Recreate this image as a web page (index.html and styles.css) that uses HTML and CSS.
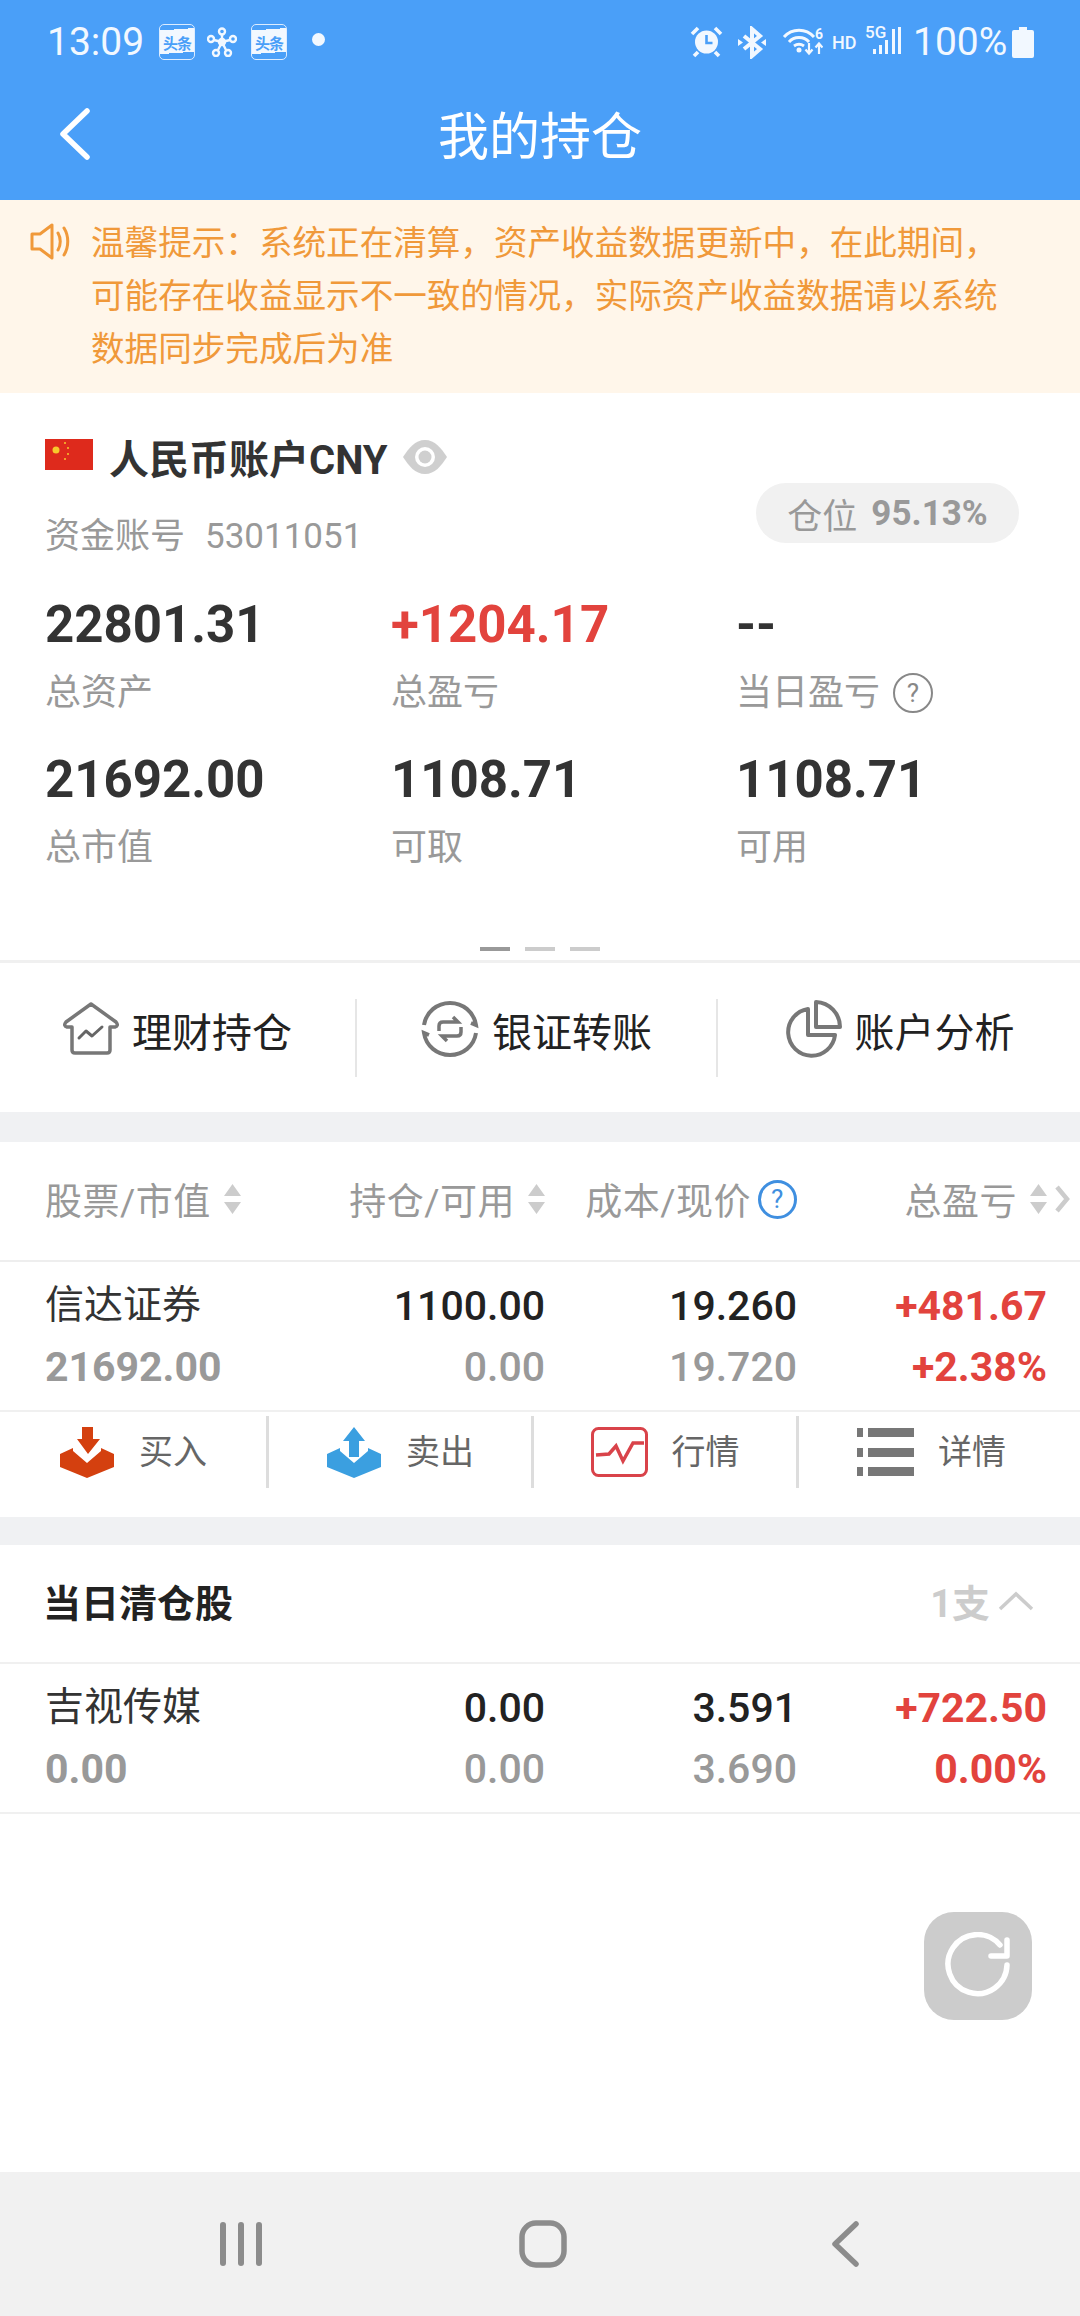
FILE: index.html
```html
<!DOCTYPE html>
<html>
<head>
    <meta charset="UTF-8">
    <title>我的持仓</title>
    <link rel="stylesheet" href="styles.css">
</head>
<body>
<div class="page">
    <div class="status-bar">
        <div class="status-left">
            <span class="clock">13:09</span>
            <span class="app-badge">头条</span>
            <svg width="30" height="30" viewBox="0 0 30 30" fill="none" stroke="#f2f8ff" stroke-width="2.400"><path d="M15 15V7M15 15 7 13M15 15l8-2M15 15l-4 8M15 15l4 8"/><circle cx="15" cy="15" r="3" fill="#f2f8ff"/><circle cx="15" cy="4.500" r="3"/><circle cx="4" cy="12" r="3"/><circle cx="26" cy="12" r="3"/><circle cx="9" cy="26" r="3"/><circle cx="21" cy="26" r="3"/></svg>
            <span class="app-badge">头条</span>
            <span class="status-dot"></span>
        </div>
        <div class="status-right">
            <svg class="ic-alarm" width="33" height="32" viewBox="0 0 33 32"><circle cx="16.500" cy="16" r="11.500" fill="#f2f8ff"/><path d="M16.500 9v8h6" fill="none" stroke="#4a9ff8" stroke-width="2.600"/><path d="M2 8l6-6M31 8l-6-6M8 26l-4 4M25 26l4 4" stroke="#f2f8ff" stroke-width="3.600"/></svg>
            <svg class="ic-bt" width="28" height="33" viewBox="0 0 28 33" fill="none" stroke="#f2f8ff" stroke-width="4"><path d="M6 10l16 13-8 7V3l8 7L6 23"/><path d="M0 13l5 3.500L0 20zM28 13l-5 3.500 5 3.500z" fill="#f2f8ff" stroke="none"/></svg>
            <svg class="ic-wifi" width="41" height="36" viewBox="0 -2 41 36" fill="none" stroke="#f2f8ff" stroke-width="3"><path d="M2 11C10 2 24 2 32 11M7 16c5-6 15-6 20 0M12 20c3-2 7-2 10 0"/><circle cx="17" cy="24" r="2.500" fill="#f2f8ff" stroke="none"/><path d="M27 17v10M23.500 23.500l3.500 4 3.500-4M37 28V18M33.500 21.500l3.500-4 3.500 4" stroke-width="2.200"/><text x="33" y="13" class="sig-six">6</text></svg>
            <span class="hd">HD</span>
            <svg class="ic-signal" width="36" height="42" viewBox="0 0 36 42"><text x="0" y="17" class="sig-text">5G</text><path d="M8 28h3v5H8zM14 24h3v9h-3zM20 19h3v14h-3zM27 8h3v25h-3zM33 6h3v27h-3z" fill="#f2f8ff"/></svg>
            <span class="battery-text">100%</span>
            <svg width="22" height="31" viewBox="0 0 22 31"><path d="M7 0h8v3h5q2 0 2 2v24q0 2-2 2H2q-2 0-2-2V5q0-2 2-2h5z" fill="#f2f8ff"/></svg>
        </div>
    </div>
    <div class="title-bar">
        <svg class="back-icon" width="34" height="52" viewBox="0 0 34 52" fill="none" stroke="#fff" stroke-width="5.500" stroke-linecap="round" stroke-linejoin="round"><path d="M29 3 5 26l24 23"/></svg>
        <h1>我的持仓</h1>
    </div>

    <div class="notice">
        <svg class="notice-icon" width="42" height="37" viewBox="0 0 42 37" fill="none" stroke="#f0993a" stroke-width="3" stroke-linejoin="round" stroke-linecap="round"><path d="M2 11h8L22 2v33L10 26H2z"/><path d="M28 10c3 5 3 12 0 17M34 5c5 8 5 19 0 27"/></svg>
        <p>温馨提示：系统正在清算，资产收益数据更新中，在此期间，<br>可能存在收益显示不一致的情况，实际资产收益数据请以系统<br>数据同步完成后为准</p>
    </div>

    <div class="account">
        <div class="account-head">
            <div>
                <div class="account-title">
                    <svg class="flag" width="48" height="31" viewBox="0 0 48 31"><rect width="48" height="31" fill="#de2a1c"/><circle cx="11" cy="11" r="3.500" fill="#f7c92c"/><circle cx="20" cy="4" r="1" fill="#f7c92c"/><circle cx="23" cy="9" r="1" fill="#f7c92c"/><circle cx="23" cy="15" r="1" fill="#f7c92c"/><circle cx="20" cy="20" r="1" fill="#f7c92c"/></svg>
                    <span>人民币账户CNY</span>
                    <svg width="46" height="34" viewBox="0 0 46 34"><path d="M23 0C13 0 7 8 1 17c6 9 12 17 22 17s16-8 22-17C39 8 33 0 23 0z" fill="#cfcfcf"/><circle cx="23" cy="17" r="10" fill="#fff"/><circle cx="23" cy="17" r="6.500" fill="#cfcfcf"/></svg>
                </div>
                <div class="account-no"><span>资金账号</span><span>53011051</span></div>
            </div>
            <div class="position-pill">仓位<b>95.13%</b></div>
        </div>
        <div class="stats">
            <div class="stat"><div class="stat-value">22801.31</div><div class="stat-label">总资产</div></div>
            <div class="stat"><div class="stat-value red">+1204.17</div><div class="stat-label">总盈亏</div></div>
            <div class="stat"><div class="stat-value">--</div><div class="stat-label">当日盈亏<span class="help-grey">?</span></div></div>
            <div class="stat"><div class="stat-value">21692.00</div><div class="stat-label">总市值</div></div>
            <div class="stat"><div class="stat-value">1108.71</div><div class="stat-label">可取</div></div>
            <div class="stat"><div class="stat-value">1108.71</div><div class="stat-label">可用</div></div>
        </div>
        <div class="pager"><span class="on"></span><span></span><span></span></div>
    </div>

    <div class="actions">
        <div class="action">
            <svg width="56" height="53" viewBox="0 0 56 53" fill="none" stroke="#777" stroke-width="3.500" stroke-linejoin="round" stroke-linecap="round"><path d="M28 2 3 20q-3 4 1 5h5v23q0 3 3 3h32q3 0 3-3V25h5q4-1 1-5z"/><path d="M16 36l7-7 6 5 10-9" stroke="#666" stroke-width="3"/></svg>
            <span>理财持仓</span>
        </div>
        <div class="action">
            <svg width="58" height="58" viewBox="0 0 58 58" fill="none" stroke="#777" stroke-width="4"><path d="M3 25C5 12 16 3 29 3s24 9 26 22l-5-2M55 33C53 46 42 55 29 55S5 46 3 33l5 2"/><path d="M18 31v-5q0-4 4-4h15l-5-5M40 27v5q0 4-4 4H21l5 5" stroke-width="3.500"/></svg>
            <span>银证转账</span>
        </div>
        <div class="action">
            <svg width="58" height="58" viewBox="0 0 58 58" fill="none" stroke="#777" stroke-width="4" stroke-linejoin="round"><path d="M24 9A23.500 23.500 0 1 0 51 35H24z"/><path d="M32 2a25 25 0 0 1 24 25H32z"/></svg>
            <span>账户分析</span>
        </div>
    </div>
    <div class="band"></div>

    <div class="table-head">
        <div class="th th-first">股票/市值<svg class="sort" width="17" height="30" viewBox="0 0 17 30"><path d="M8.500 0 17 12H0zM0 18h17L8.500 30z"/></svg></div>
        <div class="th">持仓/可用<svg class="sort" width="17" height="30" viewBox="0 0 17 30"><path d="M8.500 0 17 12H0zM0 18h17L8.500 30z"/></svg></div>
        <div class="th">成本/现价<span class="help-blue">?</span></div>
        <div class="th">总盈亏<svg class="sort" width="17" height="30" viewBox="0 0 17 30"><path d="M8.500 0 17 12H0zM0 18h17L8.500 30z"/></svg><svg class="more" width="16" height="30" viewBox="0 0 16 30" fill="none" stroke="#ccc" stroke-width="4.500"><path d="M3 3l10 12L3 27"/></svg></div>
    </div>

    <div class="row">
        <div class="name">信达证券</div><div class="num">1100.00</div><div class="num">19.260</div><div class="num red bold">+481.67</div>
        <div class="num-left grey bold">21692.00</div><div class="num grey">0.00</div><div class="num grey">19.720</div><div class="num red bold">+2.38%</div>
    </div>
    <div class="trade">
        <div class="trade-item">
            <svg width="56" height="51" viewBox="0 0 56 51" fill="#d4400f"><path d="M1 27l13-6v3l14 12 14-12v-3l13 6v13L28 51 1 40z"/><path d="M23 0h11v12h7L29 27 18 12h5z"/></svg>
            <span>买入</span>
        </div>
        <div class="trade-item">
            <svg width="56" height="51" viewBox="0 0 56 51" fill="#3b9fe0"><path d="M1 27l13-6v3l14 12 14-12v-3l13 6v13L28 51 1 40z"/><path d="M28 0l11 14h-6v16H23V14h-6z"/></svg>
            <span>卖出</span>
        </div>
        <div class="trade-item">
            <svg width="57" height="50" viewBox="0 0 57 50" fill="none" stroke="#d9434a"><rect x="1.500" y="1.500" width="54" height="47" rx="6" stroke-width="3"/><path d="M5 28l13-1 7-8 7 15 10-18h11" stroke-width="3.500"/></svg>
            <span>行情</span>
        </div>
        <div class="trade-item">
            <svg width="57" height="48" viewBox="0 0 57 48" fill="#777"><path d="M0 0h6v9H0zM11 0h46v9H11zM0 20h6v9H0zM11 20h46v9H11zM0 39h6v9H0zM11 39h46v9H11z"/></svg>
            <span>详情</span>
        </div>
    </div>
    <div class="band band-low"></div>

    <div class="cleared-head">
        <span class="cleared-title">当日清仓股</span>
        <span class="cleared-count">1支<svg width="36" height="20" viewBox="0 0 36 20" fill="none" stroke="#ccc" stroke-width="3.500"><path d="M2 18 18 3l16 15"/></svg></span>
    </div>
    <div class="row">
        <div class="name">吉视传媒</div><div class="num">0.00</div><div class="num">3.591</div><div class="num red bold">+722.50</div>
        <div class="num-left grey bold">0.00</div><div class="num grey">0.00</div><div class="num grey">3.690</div><div class="num red bold">0.00%</div>
    </div>

    <div class="spacer"></div>
    <div class="nav-bar">
        <svg width="42" height="46" viewBox="0 0 42 46" fill="#8c8c8c"><rect y="1" width="6" height="44" rx="3"/><rect x="18" y="1" width="6" height="44" rx="3"/><rect x="36" y="1" width="6" height="44" rx="3"/></svg>
        <svg class="nav-home" width="48" height="48" viewBox="0 0 48 48" fill="none" stroke="#8c8c8c" stroke-width="5.500"><rect x="3" y="3" width="42" height="42" rx="14"/></svg>
        <svg width="28" height="46" viewBox="0 0 28 46" fill="none" stroke="#8c8c8c" stroke-width="5.500" stroke-linecap="round" stroke-linejoin="round"><path d="M24 3 3 23l21 20"/></svg>
    </div>

    <div class="refresh">
        <svg width="68" height="68" viewBox="0 0 68 68" fill="none" stroke="#fff" stroke-width="5.500" stroke-linecap="round" stroke-linejoin="round"><path d="M63 33a29.500 29.500 0 1 1-7-20"/><path d="M63 8v16H47"/></svg>
    </div>
</div>
</body>
</html>
```

FILE: styles.css
```css
/* page frame */
* {
    box-sizing: border-box;
}

body {
    margin: 0;
    background-color: #fff;
    font-family: Roboto, "Noto Sans CJK SC", sans-serif;
    color: #333;
}

.page {
    position: relative;
    display: flex;
    flex-direction: column;
    width: 1080px;
    height: 2316px;
    overflow: hidden;
}

.red {
    color: #e2433d;
}

.grey {
    color: #999;
}

.bold {
    font-weight: 700;
}

/* status bar */
.status-bar {
    display: flex;
    justify-content: space-between;
    align-items: center;
    height: 84px;
    padding: 0 46px 0 47px;
    background-color: #4a9ff8;
    color: #f2f8ff;
}

.status-left,
.status-right {
    display: flex;
    align-items: center;
}

.clock {
    width: 112px;
    font-size: 39px;
}

.app-badge {
    display: flex;
    align-items: center;
    justify-content: center;
    width: 36px;
    height: 36px;
    margin-right: 12px;
    border: 1.500px solid #dcecff;
    border-radius: 5px;
    background: linear-gradient(176deg, transparent 15%, #f2f8ff 15%, #f2f8ff 80%, transparent 80%);
    color: #4a9ff8;
    font-size: 15px;
    font-weight: 700;
    letter-spacing: -1px;
    white-space: nowrap;
}

.status-left svg {
    margin-right: 14px;
}

.status-dot {
    width: 13px;
    height: 13px;
    margin: 0 0 6px 13px;
    border-radius: 50%;
    background-color: #f2f8ff;
}

.ic-alarm {
    margin-right: 15px;
}

.ic-bt {
    margin-right: 16px;
}

.ic-wifi {
    margin-right: 9px;
}

.hd {
    width: 33px;
    font-size: 18px;
    font-weight: 500;
}

.sig-text {
    fill: #f2f8ff;
    font-size: 17px;
    font-weight: 500;
}

.sig-six {
    fill: #f2f8ff;
    stroke: none;
    font-size: 14px;
    font-weight: 700;
}

.battery-text {
    width: 99px;
    margin-left: 12px;
    font-size: 39px;
    white-space: nowrap;
}

/* title bar */
.title-bar {
    position: relative;
    display: flex;
    align-items: center;
    justify-content: center;
    height: 116px;
    background-color: #4a9ff8;
}

.title-bar h1 {
    margin: 0 0 8px;
    color: #fff;
    font-size: 51px;
    font-weight: 400;
    line-height: 100px;
}

.back-icon {
    position: absolute;
    left: 58px;
    top: 24px;
}

/* notice */
.notice {
    display: flex;
    height: 193px;
    padding: 23px 0 0 30px;
    background-color: #fff6ea;
}

.notice-icon {
    flex: none;
    margin-right: 19px;
}

.notice p {
    margin: -6px 0 0;
    color: #f0993a;
    font-size: 33.600px;
    line-height: 53px;
    white-space: nowrap;
}

/* account card */
.account {
    height: 567px;
}

.account-head {
    display: flex;
    justify-content: space-between;
    height: 168px;
    padding: 40px 61px 0 45px;
}

.account-title {
    display: flex;
    align-items: center;
    height: 48px;
    font-size: 40px;
    font-weight: 700;
}

.account-title span {
    margin: 0 14px 0 16px;
    white-space: nowrap;
}

.flag {
    margin-bottom: 6px;
}

.account-no {
    display: flex;
    gap: 20px;
    margin-top: 32px;
    color: #999;
    font-size: 35px;
    line-height: 48px;
}

.position-pill {
    display: flex;
    align-items: center;
    justify-content: center;
    gap: 14px;
    width: 263px;
    height: 60px;
    margin-top: 50px;
    border-radius: 30px;
    background-color: #f1f1f1;
    color: #999;
    font-size: 35px;
}

.stats {
    display: grid;
    grid-template-columns: 346px 345px 300px;
    row-gap: 32px;
    margin-top: 34px;
    padding-left: 45px;
}

.stat-value {
    height: 60px;
    font-size: 51px;
    font-weight: 700;
    line-height: 60px;
}

.stat-label {
    display: flex;
    align-items: center;
    height: 50px;
    margin-top: 13px;
    color: #999;
    font-size: 36px;
    line-height: 50px;
}

.help-grey {
    display: flex;
    align-items: center;
    justify-content: center;
    width: 40px;
    height: 40px;
    margin-left: 13px;
    border: 2px solid #888;
    border-radius: 50%;
    color: #888;
    font-size: 26px;
}

.pager {
    display: flex;
    justify-content: center;
    gap: 15px;
    margin-top: 74px;
}

.pager span {
    width: 30px;
    height: 4px;
    background-color: #ccc;
}

.pager .on {
    background-color: #999;
}

/* shortcut row */
.actions {
    display: grid;
    grid-template-columns: 355px 361px 364px;
    align-items: center;
    height: 152px;
    border-top: 3px solid #f0f0f0;
}

.action {
    display: flex;
    align-items: center;
    justify-content: center;
    gap: 13px;
    height: 78px;
    color: #222;
    font-size: 40px;
}

.action + .action {
    border-left: 2px solid #e6e6e6;
}

.action svg {
    margin-bottom: 18px;
}

.action span {
    margin-bottom: 16px;
}

.band {
    height: 30px;
    background-color: #f0f1f3;
}

.band-low {
    height: 28px;
}

/* holdings table */
.table-head {
    display: grid;
    grid-template-columns: 280px 220px 252px 273px;
    align-items: center;
    height: 120px;
    padding: 0 10px 4px 45px;
    border-bottom: 2px solid #eee;
}

.th {
    display: flex;
    align-items: center;
    justify-content: flex-end;
    color: #999;
    font-size: 37px;
    letter-spacing: .5px;
    white-space: nowrap;
}

.th-first {
    justify-content: flex-start;
}

.sort {
    flex: none;
    margin-left: 13px;
    fill: #ccc;
}

.more {
    flex: none;
    margin-left: 7px;
}

.help-blue {
    display: flex;
    align-items: center;
    justify-content: center;
    width: 39px;
    height: 39px;
    margin-left: 7px;
    border: 3px solid #3f8fe0;
    border-radius: 50%;
    color: #3f8fe0;
    font-size: 26px;
}

.row {
    display: grid;
    grid-template-columns: 280px 220px 252px 250px;
    grid-auto-rows: 61px;
    align-items: center;
    height: 150px;
    padding: 13px 33px 0 45px;
    border-bottom: 2px solid #f0f0f0;
}

.name {
    margin-bottom: 10px;
    color: #333;
    font-size: 39px;
    white-space: nowrap;
}

.num {
    color: #222;
    font-size: 41px;
    font-weight: 500;
    text-align: right;
}

.num.grey {
    color: #999;
}

.num.red {
    color: #e2433d;
    font-weight: 700;
}

.num-left {
    font-size: 41px;
}

/* buy and sell row */
.trade {
    display: grid;
    grid-template-columns: 266px 265px 265px 268px;
    height: 105px;
    padding-top: 4px;
}

.trade-item {
    display: flex;
    align-items: center;
    justify-content: center;
    gap: 24px;
    height: 72px;
    color: #666;
    font-size: 34px;
}

.trade-item span {
    margin-bottom: 6px;
}

.trade-item + .trade-item {
    border-left: 3px solid #ddd;
}

/* cleared stocks */
.cleared-head {
    display: flex;
    justify-content: space-between;
    align-items: center;
    height: 119px;
    padding: 0 46px 0 43px;
    border-bottom: 2px solid #f0f0f0;
}

.cleared-title {
    margin-bottom: 6px;
    color: #222;
    font-size: 38px;
    font-weight: 700;
}

.cleared-count {
    display: flex;
    align-items: center;
    gap: 8px;
    margin-bottom: 6px;
    color: #ccc;
    font-size: 38px;
    font-weight: 700;
}

.spacer {
    flex: 1;
}

/* system nav */
.nav-bar {
    display: flex;
    align-items: center;
    height: 144px;
    padding-left: 220px;
    background-color: #f1f1f1;
}

.nav-home {
    margin: 0 265px 0 257px;
}

/* floating refresh */
.refresh {
    position: absolute;
    left: 924px;
    top: 1912px;
    display: flex;
    align-items: center;
    justify-content: center;
    width: 108px;
    height: 108px;
    border-radius: 30px;
    background-color: #ccc;
}
```
